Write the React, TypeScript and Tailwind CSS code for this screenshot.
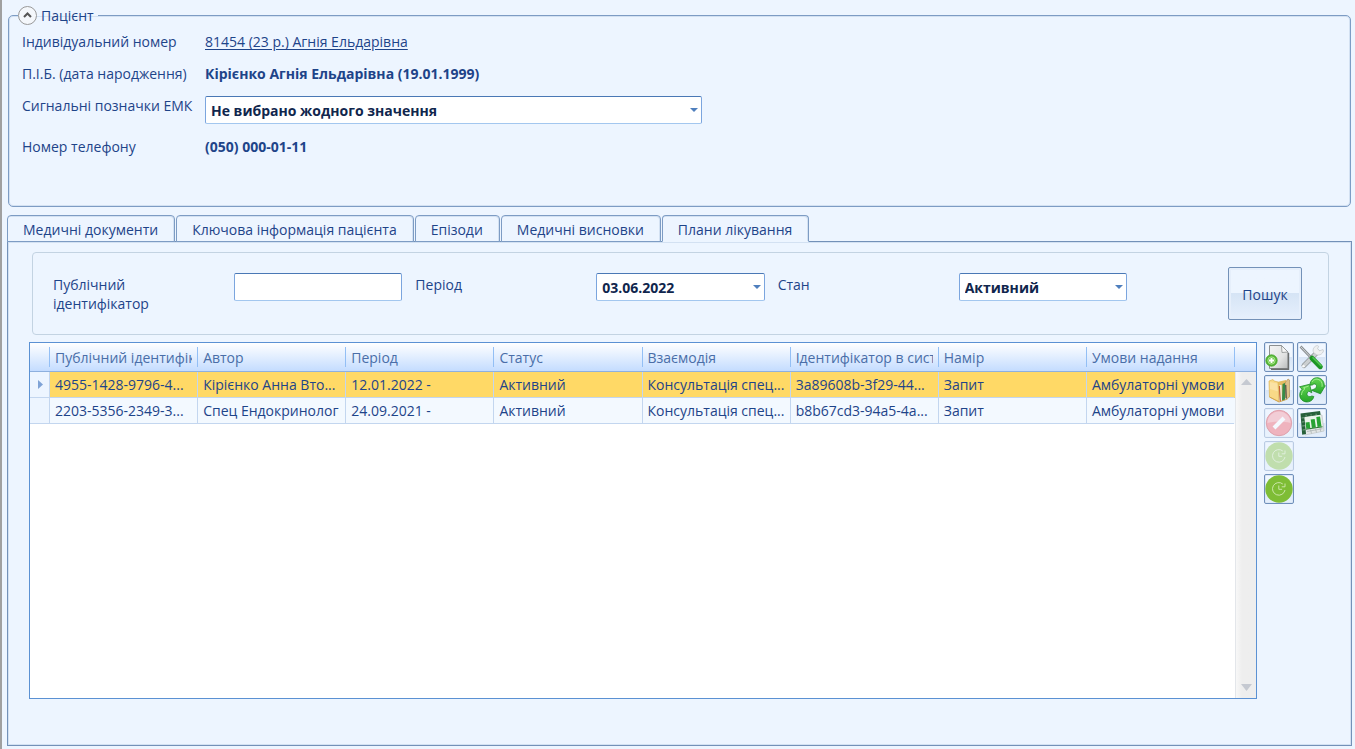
import { useState } from "react";
import type { ReactNode } from "react";

interface CarePlan {
  publicId: string;
  author: string;
  period: string;
  status: string;
  interaction: string;
  systemId: string;
  intent: string;
  conditions: string;
}

const plans: CarePlan[] = [
  {
    publicId: "4955-1428-9796-4...",
    author: "Кірієнко Анна Вто...",
    period: "12.01.2022 -",
    status: "Активний",
    interaction: "Консультація спец...",
    systemId: "3a89608b-3f29-44...",
    intent: "Запит",
    conditions: "Амбулаторні умови",
  },
  {
    publicId: "2203-5356-2349-3...",
    author: "Спец Ендокринолог",
    period: "24.09.2021 -",
    status: "Активний",
    interaction: "Консультація спец...",
    systemId: "b8b67cd3-94a5-4a...",
    intent: "Запит",
    conditions: "Амбулаторні умови",
  },
];

const columns: { key: keyof CarePlan; title: string }[] = [
  { key: "publicId", title: "Публічний ідентифік" },
  { key: "author", title: "Автор" },
  { key: "period", title: "Період" },
  { key: "status", title: "Статус" },
  { key: "interaction", title: "Взаємодія" },
  { key: "systemId", title: "Ідентифікатор в сист" },
  { key: "intent", title: "Намір" },
  { key: "conditions", title: "Умови надання" },
];

const tabs = ["Медичні документи", "Ключова інформація пацієнта", "Епізоди", "Медичні висновки", "Плани лікування"];

const fieldClass =
  "h-7 w-full rounded-[2px] border border-[#7ba5de] border-t-[#4a78b5] border-b-[#a3c7ef] bg-white px-[5px] font-bold text-[#10264d] outline-none";

function SelectField({ id, value }: { id: string; value: string }) {
  return (
    <div className="relative w-full">
      <select id={id} className={`${fieldClass} appearance-none`}>
        <option>{value}</option>
      </select>
      <svg className="pointer-events-none absolute top-3 right-1 h-1 w-2" viewBox="0 0 8 4">
        <path d="M0 0h8L4 4z" fill="#4f7fbd" />
      </svg>
    </div>
  );
}

function FilterItem({ id, label, children }: { id: string; label: string; children: ReactNode }) {
  return (
    <div className="flex flex-1 items-start">
      <label htmlFor={id} className="w-[181px] shrink-0 pt-[2px] pr-14 leading-[19px]">
        {label}
      </label>
      {children}
    </div>
  );
}

function ToolButton({ label, disabled, children }: { label: string; disabled?: boolean; children: ReactNode }) {
  return (
    <button
      type="button"
      aria-label={label}
      disabled={disabled}
      className="flex size-[30px] items-center justify-center rounded-[2px] border border-[#6f8fba] bg-linear-to-b from-[#f1f7ff] from-50% via-[#d8e5f6] via-50% to-[#e6f0fc] shadow-[inset_0_0_0_1px_#dbe7f6] disabled:opacity-40"
    >
      {children}
    </button>
  );
}

function AddDocumentIcon() {
  return (
    <svg className="size-7" viewBox="0 0 28 28">
      <defs>
        <linearGradient id="page" x1="0" y1="0" x2="1" y2="1">
          <stop offset="0" stopColor="#f4f4f4" />
          <stop offset="0.6" stopColor="#e2e3e3" />
          <stop offset="1" stopColor="#b9bbbc" />
        </linearGradient>
        <radialGradient id="plus">
          <stop offset="0" stopColor="#8fdf66" />
          <stop offset="1" stopColor="#4aae2a" />
        </radialGradient>
      </defs>
      <path d="M4.500 2.500H16.500L23 9V25.500H4.500z" fill="url(#page)" stroke="#8c8f90" />
      <path d="M23.500 10V26.200H6" fill="none" stroke="#6a6d6e" strokeWidth="1.400" />
      <path d="M16.500 2.500L17 9.500L23 9z" fill="#f6f6f6" stroke="#8d9091" strokeWidth=".8" />
      <circle cx="6.500" cy="17.500" r="5.700" fill="url(#plus)" stroke="#4ca832" strokeWidth=".8" />
      <circle cx="6.500" cy="17.500" r="3.600" fill="#6fc94b" stroke="#b4e79c" strokeWidth=".8" />
      <path d="M6.500 15v5M4 17.500h5" stroke="#fff" strokeWidth="1.800" />
    </svg>
  );
}

function ToolsIcon() {
  return (
    <svg className="size-7" viewBox="0 0 28 28">
      <path d="M19.500 9L6 22.500" stroke="#8f9699" strokeWidth="5" strokeLinecap="round" />
      <path d="M19.500 9L6 22.500" stroke="#cbcfd1" strokeWidth="3.400" strokeLinecap="round" />
      <path
        d="M15.500 9.500c-1.200-3 .3-6.300 3.800-7l1.400.8-1.200 2.500 2.200 2 3.300-1.300.5 1.500c-1 3-4 4.700-7 3.700z"
        fill="#eff0f1"
        stroke="#c0c5c8"
        strokeWidth=".7"
      />
      <circle cx="5.500" cy="23.300" r="1.300" fill="#f8f9f9" />
      <path d="M2.500 3.500L13 14.500" stroke="#8a8f92" strokeWidth="2.600" />
      <path d="M2.500 3.500L13 14.500" stroke="#d4d7d8" strokeWidth="1" />
      <path d="M14 15.200L22.300 23.700" stroke="#1c9526" strokeWidth="5" strokeLinecap="round" />
      <path d="M15 14.700L23 22.700" stroke="#52c84f" strokeWidth="1.600" strokeLinecap="round" />
    </svg>
  );
}

function FoldersIcon() {
  return (
    <svg className="size-7" viewBox="0 0 28 28">
      <path d="M12 6l9-2 4 16-10 4z" fill="#e4bd62" />
      <path d="M20 7l3-4 1.500 1V21l-3 2z" fill="#dfc188" stroke="#a98850" strokeWidth=".6" />
      <path d="M17.500 8l2.500-1v17l-3 1z" fill="#378a49" />
      <path d="M14.500 9h2l.5 15-2 1z" fill="#eeeee5" />
      <path d="M20.700 9l.5 13.500" stroke="#55564f" strokeWidth="1.300" />
      <path d="M14.300 10l1 15.500" stroke="#c9663c" strokeWidth="1.300" />
      <path d="M4 5l4-1.500 1 1.500 4 1 .8 19.500L4.500 21z" fill="#f8d987" stroke="#e0b452" strokeWidth=".7" />
      <path d="M5 6l7.500 1.500.5 8L5 13z" fill="#fff" opacity=".25" />
      <path d="M4.500 21l9.500 5 8.500-3" stroke="#cf9f45" fill="none" strokeWidth=".9" />
    </svg>
  );
}

function RefreshIcon() {
  return (
    <svg className="size-7" viewBox="0 0 28 28">
      <defs>
        <linearGradient id="arrows" x1="0" y1="0" x2="0" y2="1">
          <stop offset="0" stopColor="#63d552" />
          <stop offset="1" stopColor="#27a62a" />
        </linearGradient>
      </defs>
      <path
        d="M12 9.200C12 4 16 1.200 20 1.800c4 .6 6.300 4 6.200 7.400l1.100.5-4.800 8.100-9.200-3.600 3.900-1.500c1.400-1.500 1.700-3.300.8-4.200-1.200-1-2.600-.6-3.500.4z"
        fill="url(#arrows)"
        stroke="#1b8a27"
        strokeWidth=".8"
      />
      <path
        d="M15.800 20.500c-.7 3.600-4 5.800-7.700 5.400-4.200-.5-6.700-4-6.300-7.700.2-2.200 1.200-3.800 2.300-5L1.500 10.800l10-2.500 2.300 8.500-3-1.700c-1.700 1.300-2.300 3-1.500 4.300 1 1.400 3.200 1.500 4.500.6z"
        fill="url(#arrows)"
        stroke="#1b8a27"
        strokeWidth=".8"
      />
      <path d="M3.500 19c0-2.500 1.300-4.700 3.500-6.200l-1.500-1 5-1.700M14 6c1.800-3 5.500-3.700 8-1.700 2 1.600 2.500 4 2 6.500" stroke="#a9f095" fill="none" strokeWidth=".9" />
    </svg>
  );
}

function ForbidIcon() {
  return (
    <svg className="size-7" viewBox="0 0 28 28">
      <circle cx="14" cy="14" r="12.700" fill="#f4525e" stroke="#c92836" />
      <path d="M2.500 14a11.500 11.500 0 0 1 23 0c-7-2-16-2-23 0z" fill="#fb929a" />
      <path d="M9 19L19 9" stroke="#fff" strokeWidth="4" />
    </svg>
  );
}

function ReportIcon() {
  return (
    <svg className="size-7" viewBox="0 0 28 28">
      <path d="M5 8l19-2 2 16-19 4z" fill="#e3e6e6" stroke="#b9c0c0" strokeWidth="0.600" />
      <path d="M2.500 4.500L22 2l.7 4L6.500 8.500 8 25l-3.800.8z" fill="#27603a" />
      <path d="M6.500 8L22.700 5.800l1.800 12L8 20.200z" fill="#eaf3ea" />
      <path d="M7.500 13.500l4-.5.8 6.200-4 .6zM12.700 10.500l4-.6 1.200 8.500-4 .6zM18.300 8l3.700-.5 1.500 10-4 .6z" fill="#27a233" />
      <path d="M8 20.200l16.500-2.400" stroke="#25762d" />
      <path d="M9 22.500l15.500-2.800M12.500 20.500l1 4M17.500 19.800l1 3.700M22 19l.8 3.700" stroke="#a5adac" strokeWidth=".7" />
      <path d="M3.500 9l2.500-.3M4 13l2.500-.3M4.200 17l2.700-.3M4.600 21l2.700-.3M8 5.800l.2 1.400M13 5.200l.2 1.400M18 4.600l.2 1.400" stroke="#9ac3a0" strokeWidth=".7" />
    </svg>
  );
}

function ClockIcon() {
  return (
    <svg className="size-7" viewBox="0 0 28 28">
      <circle cx="14" cy="14" r="13.700" fill="#7ebd35" />
      <path d="M17.800 9A6.300 6.300 0 1 0 20 15" fill="none" stroke="#d3eab4" strokeWidth=".9" />
      <path d="M20 8.500v3.300h-3.300M13.800 10.500v3.800h3.300" fill="none" stroke="#d3eab4" strokeWidth=".9" />
    </svg>
  );
}

export default function App() {
  const [activeTab, setActiveTab] = useState("Плани лікування");
  const [selectedRow, setSelectedRow] = useState(0);

  return (
    <main className="flex min-h-screen flex-col border-l-2 border-[#a0a0a0] bg-[#edf5ff] pr-[3px] pb-[3px] pl-[5px] font-['Open_Sans','Noto_Sans',sans-serif] text-[14px] leading-[19px] text-[#1e4489]">
      {/* Patient */}
      <fieldset className="mx-px mt-[6px] h-[201px] rounded-[5px] border border-[#7d9cc4] px-[13px] shadow-[inset_0_0_0_1px_#d3e1f2]">
        <legend className="-ml-1 flex h-[19px] items-center gap-1 pr-1">
          <button
            type="button"
            aria-label="Згорнути"
            className="flex size-[19px] items-center justify-center rounded-full border border-[#999] bg-[#f4f7fb]"
          >
            <svg className="size-[9px]" viewBox="0 0 9 9">
              <path d="M1 6l3.500-3.500L8 6" fill="none" stroke="#555" strokeWidth="2" />
            </svg>
          </button>
          Пацієнт
        </legend>
        <div className="grid grid-cols-[183px_1fr] gap-y-[13px] pt-[7px]">
          <span>Індивідуальний номер</span>
          <a href="#patient" className="justify-self-start underline underline-offset-2">
            81454 (23 р.) Агнія Ельдарівна
          </a>
          <span>П.І.Б. (дата народження)</span>
          <b>Кірієнко Агнія Ельдарівна (19.01.1999)</b>
          <label htmlFor="signal">Сигнальні позначки ЕМК</label>
          <div className="w-[497px] max-w-full">
            <SelectField id="signal" value="Не вибрано жодного значення" />
          </div>
          <span>Номер телефону</span>
          <b>(050) 000-01-11</b>
        </div>
      </fieldset>

      {/* Tabs */}
      <div role="tablist" className="z-10 mt-2 -mb-px flex gap-px">
        {tabs.map((tab) => (
          <button
            key={tab}
            type="button"
            role="tab"
            aria-selected={tab === activeTab}
            onClick={() => setActiveTab(tab)}
            className={`h-[27px] rounded-t-[4px] border border-[#7d9cc4] bg-[#edf5ff] pt-[2px] pr-4 pl-[15px] shadow-[inset_-1px_1px_0_#d3e1f2] ${
              tab === activeTab ? "border-b-[#edf5ff]" : ""
            }`}
          >
            {tab}
          </button>
        ))}
      </div>

      <section className="flex flex-1 flex-col border border-[#7391b8] pt-[10px] pr-[22px] pb-[46px] pl-[21px] shadow-[inset_0_0_0_1px_#d3e1f2]">
        {/* Filter */}
        <form
          onSubmit={(e) => e.preventDefault()}
          className="ml-[3px] flex h-[83px] items-start gap-[13px] rounded-[4px] border border-[#c3d3e2] pt-[14px] pr-[26px] pl-5"
        >
          <div className="flex flex-1 gap-[13px] pt-[6px]">
            <FilterItem id="public-id" label="Публічний ідентифікатор">
              <input id="public-id" type="text" className={fieldClass} />
            </FilterItem>
            <FilterItem id="period" label="Період">
              <SelectField id="period" value="03.06.2022" />
            </FilterItem>
            <FilterItem id="state" label="Стан">
              <SelectField id="state" value="Активний" />
            </FilterItem>
          </div>
          <button
            type="submit"
            className="ml-[88px] h-[53px] w-[74px] rounded-[2px] border border-[#7391b8] bg-linear-to-b from-[#edf5ff] from-50% via-[#d6e4f5] via-50% to-[#e6f0fd] pt-[2px] shadow-[inset_0_0_0_2px_#e6effb]"
          >
            Пошук
          </button>
        </form>

        <div className="mt-[7px] flex flex-1 gap-[7px] pr-[2px]">
          {/* Care plans */}
          <div className="relative min-w-0 flex-1 border border-[#5b91d3] bg-white">
            <table className="w-full table-fixed border-separate border-spacing-0 text-left">
              <colgroup>
                <col className="w-[19px]" />
                {columns.map((column) => (
                  <col key={column.key} />
                ))}
                <col className="w-[22px]" />
              </colgroup>
              <thead>
                <tr className="bg-linear-to-b from-white to-[#c2dbff] text-[#4a6ea8]">
                  <th className="h-[29px] border-b border-[#8eb0de] p-0" />
                  {columns.map((column) => (
                    <th key={column.key} className="border-b border-[#8eb0de] p-0 font-normal">
                      <div className="h-5 border-l border-[#93bff5] px-[5px]">
                        <div className="overflow-hidden leading-[21px] whitespace-nowrap">{column.title}</div>
                      </div>
                    </th>
                  ))}
                  <th className="border-b border-[#8eb0de] p-0">
                    <div className="h-5 border-l border-[#93bff5]" />
                  </th>
                </tr>
              </thead>
              <tbody>
                {plans.map((plan, index) => (
                  <tr
                    key={plan.publicId}
                    onClick={() => setSelectedRow(index)}
                    className={index === selectedRow ? "bg-[#ffd966]" : "bg-[#f3f9ff]"}
                  >
                    <td className="h-[26px] border-b border-[#c3d6ef] bg-[#edf5ff] p-0">
                      {index === selectedRow && (
                        <svg className="ml-2 h-[9px] w-[5px]" viewBox="0 0 5 9">
                          <path d="M0 0l5 4.500L0 9z" fill="#7fa3d6" />
                        </svg>
                      )}
                    </td>
                    {columns.map((column) => (
                      <td key={column.key} className="truncate border-b border-l border-[#c3d6ef] px-[5px] py-0">
                        {plan[column.key]}
                      </td>
                    ))}
                    <td className="p-0" />
                  </tr>
                ))}
              </tbody>
            </table>
            <div className="absolute top-[29px] right-0 bottom-0 flex w-[21px] flex-col items-center justify-between border-l border-[#e3e6ea] bg-linear-to-r from-[#f8f8f8] to-[#eee] to-30% py-[7px]">
              <svg className="h-[6px] w-[11px]" viewBox="0 0 11 6">
                <path d="M0 6h11L5.500 0z" fill="#c5c9d1" />
              </svg>
              <svg className="h-[7px] w-[11px]" viewBox="0 0 11 7">
                <path d="M0 0h11L5.500 7z" fill="#c5c9d1" />
              </svg>
            </div>
          </div>

          {/* Actions */}
          <div className="flex items-start gap-[3px]">
            <div className="flex flex-col gap-[3px]">
              <ToolButton label="Додати">
                <AddDocumentIcon />
              </ToolButton>
              <ToolButton label="Відкрити">
                <FoldersIcon />
              </ToolButton>
              <ToolButton label="Скасувати" disabled>
                <ForbidIcon />
              </ToolButton>
              <ToolButton label="Відновити" disabled>
                <ClockIcon />
              </ToolButton>
              <ToolButton label="Завершити">
                <ClockIcon />
              </ToolButton>
            </div>
            <div className="flex flex-col gap-[3px]">
              <ToolButton label="Налаштування">
                <ToolsIcon />
              </ToolButton>
              <ToolButton label="Оновити">
                <RefreshIcon />
              </ToolButton>
              <ToolButton label="Звіт">
                <ReportIcon />
              </ToolButton>
            </div>
          </div>
        </div>
      </section>
    </main>
  );
}
